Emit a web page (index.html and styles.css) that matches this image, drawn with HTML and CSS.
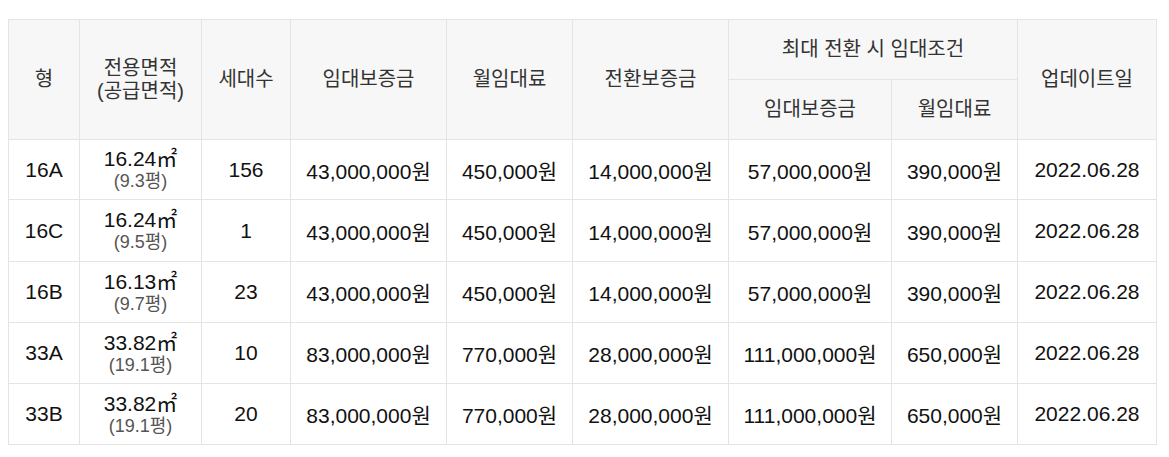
FILE: index.html
```html
<!DOCTYPE html>
<html lang="ko">
<head>
<meta charset="utf-8">
<link rel="stylesheet" href="styles.css">
</head>
<body>
<div class="wrap">
<table class="rent">
<colgroup>
<col class="c1"><col class="c2"><col class="c3"><col class="c4"><col class="c5"><col class="c6"><col class="c7"><col class="c8"><col class="c9">
</colgroup>
<thead>
<tr class="h1">
<th rowspan="2">형</th>
<th rowspan="2">전용면적<br>(공급면적)</th>
<th rowspan="2">세대수</th>
<th rowspan="2">임대보증금</th>
<th rowspan="2">월임대료</th>
<th rowspan="2">전환보증금</th>
<th colspan="2">최대 전환 시 임대조건</th>
<th rowspan="2">업데이트일</th>
</tr>
<tr class="h2">
<th>임대보증금</th>
<th>월임대료</th>
</tr>
</thead>
<tbody>
<tr class="r1">
<td>16A</td>
<td><div class="area">16.24㎡</div><div class="py">(9.3평)</div></td>
<td>156</td>
<td>43,000,000원</td>
<td>450,000원</td>
<td>14,000,000원</td>
<td>57,000,000원</td>
<td>390,000원</td>
<td>2022.06.28</td>
</tr>
<tr class="r2">
<td>16C</td>
<td><div class="area">16.24㎡</div><div class="py">(9.5평)</div></td>
<td>1</td>
<td>43,000,000원</td>
<td>450,000원</td>
<td>14,000,000원</td>
<td>57,000,000원</td>
<td>390,000원</td>
<td>2022.06.28</td>
</tr>
<tr>
<td>16B</td>
<td><div class="area">16.13㎡</div><div class="py">(9.7평)</div></td>
<td>23</td>
<td>43,000,000원</td>
<td>450,000원</td>
<td>14,000,000원</td>
<td>57,000,000원</td>
<td>390,000원</td>
<td>2022.06.28</td>
</tr>
<tr>
<td>33A</td>
<td><div class="area">33.82㎡</div><div class="py">(19.1평)</div></td>
<td>10</td>
<td>83,000,000원</td>
<td>770,000원</td>
<td>28,000,000원</td>
<td>111,000,000원</td>
<td>650,000원</td>
<td>2022.06.28</td>
</tr>
<tr>
<td>33B</td>
<td><div class="area">33.82㎡</div><div class="py">(19.1평)</div></td>
<td>20</td>
<td>83,000,000원</td>
<td>770,000원</td>
<td>28,000,000원</td>
<td>111,000,000원</td>
<td>650,000원</td>
<td>2022.06.28</td>
</tr>
</tbody>
</table>
</div>
</body>
</html>
```
FILE: styles.css
```css
html, body {
  margin: 0;
  padding: 0;
  background: #fff;
}
.wrap {
  padding: 19px 13px 0 8px;
}
.rent {
  width: 1148px;
  border-collapse: collapse;
  table-layout: fixed;
  font-family: "Liberation Sans", "Noto Sans CJK KR", sans-serif;
  font-size: 21px;
  color: #111;
  border-top: 1px solid #c8c8c8;
  border-bottom: 1px solid #ececec;
}
.c1 { width: 71px; }
.c2 { width: 122px; }
.c3 { width: 89px; }
.c4 { width: 156px; }
.c5 { width: 126px; }
.c6 { width: 156px; }
.c7 { width: 163px; }
.c8 { width: 126px; }
.c9 { width: 139px; }
.rent th,
.rent td {
  border: 1px solid #e4e4e4;
  text-align: center;
  vertical-align: middle;
  padding: 0;
}
.rent th {
  background: #f7f7f7;
  font-weight: normal;
  font-size: 20px;
  color: #333;
  line-height: 23px;
}
.rent thead tr {
  height: 60px;
}
.rent tbody tr {
  height: 61px;
}
.rent tbody tr.r1 {
  height: 60px;
}
.rent tbody tr.r2 {
  height: 62px;
}
.rent td {
  background: #fff;
}
.area {
  line-height: 24px;
}
.py {
  color: #555;
  font-size: 18px;
  line-height: 21px;
}
```
